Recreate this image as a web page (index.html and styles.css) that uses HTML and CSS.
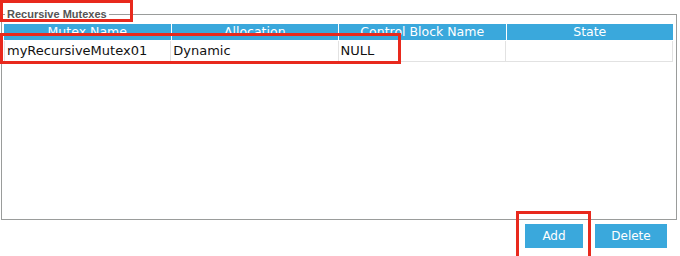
FILE: index.html
```html
<!DOCTYPE html>
<html lang="en">
<head>
    <meta charset="UTF-8">
    <title>Recursive Mutexes</title>
    <link rel="stylesheet" href="styles.css">
</head>
<body>

    <fieldset class="panel">
        <legend>Recursive Mutexes</legend>
        <div class="table-area">
            <div class="grid head">
                <div>Mutex Name</div>
                <div>Allocation</div>
                <div>Control Block Name</div>
                <div>State</div>
            </div>
            <div class="grid row">
                <div>myRecursiveMutex01</div>
                <div>Dynamic</div>
                <div>NULL</div>
                <div></div>
            </div>
        </div>
    </fieldset>

    <div class="actions">
        <button class="btn btn-add">Add</button>
        <button class="btn btn-delete">Delete</button>
    </div>

    <!-- annotation boxes -->
    <div class="mark mark-legend"></div>
    <div class="mark mark-row"></div>
    <div class="mark mark-add"></div>

</body>
</html>
```

FILE: styles.css
```css
body {
    margin: 0;
    position: relative;
    width: 680px;
    height: 256px;
    overflow: hidden;
    background-color: #fff;
    font-family: "DejaVu Sans", sans-serif;
}
.panel {
    margin: 7px 3px 0 1px;
    padding: 3px 3px 0 2px;
    border: 1px solid #9a9c9b;
    min-width: 0;
}
.panel legend {
    margin-left: 1px;
    padding: 0 2px;
    font-family: "Liberation Sans", Arial, sans-serif;
    font-weight: bold;
    font-size: 11px;
    line-height: 14px;
    color: #555;
}
.table-area {
    height: 195px;
}
.grid {
    display: grid;
    grid-template-columns: repeat(4, 1fr);
}
.head {
    column-gap: 1px;
}
.head div {
    background-color: #3aa8dc;
    color: #fff;
    font-size: 12.5px;
    line-height: 16px;
    height: 16px;
    text-align: center;
    white-space: nowrap;
    overflow: hidden;
}
.row {
    margin-top: 1px;
}
.row div {
    height: 20px;
    line-height: 20px;
    font-size: 13px;
    color: #111;
    padding-left: 2px;
    border-right: 1px solid #e2e2e2;
    border-bottom: 1px solid #e2e2e2;
    white-space: nowrap;
}
.row div:first-child {
    border-left: 1px solid #e2e2e2;
}
.actions {
    display: flex;
    justify-content: flex-end;
    gap: 12px;
    margin-top: 4px;
    padding-right: 13px;
}
.btn {
    height: 24px;
    border: none;
    background-color: #3aa8dc;
    color: #fff;
    font-family: "DejaVu Sans", sans-serif;
    font-size: 12px;
    padding: 0;
}
.btn-add {
    width: 58px;
}
.btn-delete {
    width: 72px;
}
.mark {
    position: absolute;
    box-sizing: border-box;
    border: 3px solid #e8291d;
}
.mark-legend {
    left: 0;
    top: 0;
    width: 133px;
    height: 22px;
}
.mark-row {
    left: 0;
    top: 33px;
    width: 401px;
    height: 31px;
}
.mark-add {
    left: 516px;
    top: 211px;
    width: 75px;
    height: 50px;
}
```
